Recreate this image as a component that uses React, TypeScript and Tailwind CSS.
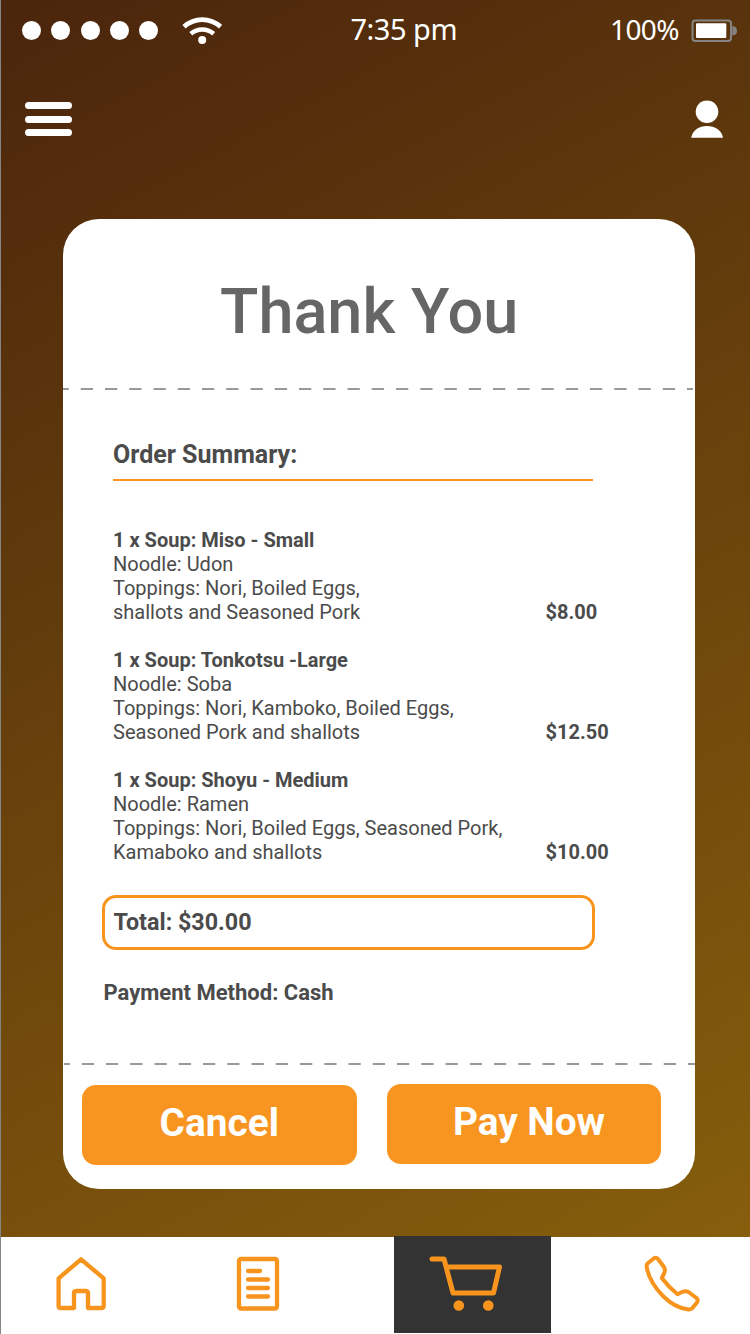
import React from 'react';

type Item = { title: string; lines: string[]; price: string };

const items: Item[] = [
  { title: '1 x Soup: Miso - Small', lines: ['Noodle: Udon', 'Toppings: Nori, Boiled Eggs,', 'shallots and Seasoned Pork'], price: '$8.00' },
  { title: '1 x Soup: Tonkotsu -Large', lines: ['Noodle: Soba', 'Toppings: Nori, Kamboko, Boiled Eggs,', 'Seasoned Pork and shallots'], price: '$12.50' },
  { title: '1 x Soup: Shoyu - Medium', lines: ['Noodle: Ramen', 'Toppings: Nori, Boiled Eggs, Seasoned Pork,', 'Kamaboko and shallots'], price: '$10.00' },
];

function StatusBar() {
  return (
    <div className="flex h-[62px] items-start font-['Noto_Sans',sans-serif] text-white">
      <div className="flex w-[350.500px] items-start pl-[22px] pt-[16px]">
        <div className="flex gap-[10.3px] pt-[5px]">
          {[0, 1, 2, 3, 4].map((n) => (
            <span key={n} className="size-[19px] rounded-full bg-white" />
          ))}
        </div>
        <svg className="ml-[24px]" width="40" height="30" viewBox="0 0 40 30" fill="none" stroke="white">
          <path d="M2 10.700C12.500 1.200 28 1.200 38.500 10.700" strokeWidth="4.800" />
          <path d="M8.800 17.700C15.500 12 25 12 31.700 17.700" strokeWidth="4.600" />
          <circle cx="20.200" cy="24" r="4" fill="white" stroke="none" />
        </svg>
      </div>
      <span className="w-[259.500px] pt-[11px] text-[29px] leading-[36px] tracking-[-0.5px] whitespace-nowrap">7:35 pm</span>
      <span className="w-[81px] pt-[11px] text-[28px] leading-[36px] tracking-[-0.600px] whitespace-nowrap">100%</span>
      <svg className="mt-[18px]" width="48" height="26" viewBox="0 0 48 26">
        <rect x="1.500" y="2.500" width="38.500" height="20.500" rx="3" fill="none" stroke="#858585" strokeWidth="2" />
        <rect x="5" y="5.300" width="30.300" height="14.700" rx="1" fill="white" />
        <path d="M41.300 8Q46 8.500 46 13Q46 17 41.300 17.500Z" fill="#858585" />
      </svg>
    </div>
  );
}

function Header() {
  return (
    <div className="flex h-[157px] items-start justify-between pt-[38px] pr-[26px] pl-[25px]">
      <div className="flex flex-col gap-[6.300px] pt-[2px]">
        <span className="h-[7.300px] w-[47px] rounded-full bg-white" />
        <span className="h-[7.300px] w-[47px] rounded-full bg-white" />
        <span className="h-[7.300px] w-[47px] rounded-full bg-white" />
      </div>
      <svg width="34" height="40" viewBox="0 0 34 40" fill="white">
        <circle cx="17" cy="11.700" r="11.300" />
        <path d="M1.200 37.800C2.500 30 9 26 17 26S31.700 30 33 37.800Z" />
      </svg>
    </div>
  );
}

function DashedLine({ offset, start, end }: { offset: number; start: number; end: number }) {
  return (
    <svg className="block shrink-0" width="632" height="2" viewBox="0 0 632 2">
      <line x1={start} y1="1" x2={end} y2="1" stroke="#999999" strokeWidth="2" strokeDasharray="12.3 11.95" strokeDashoffset={offset} />
    </svg>
  );
}

function Card() {
  return (
    <main className="ml-[63px] flex h-[970px] w-[632px] shrink-0 flex-col rounded-[36px] bg-white font-['Roboto',sans-serif] text-[#4b4b4b]">
      <h1 className="h-[169px] pt-[61px] pl-[157px] text-[63px] leading-[64px] font-medium text-[#666666]">Thank You</h1>
      <DashedLine offset={6.500} start={0} end={630} />
      <section className="flex h-[673px] flex-col pt-[50px]">
        <h2 className="ml-[50px] h-[41px] w-[480px] border-b-2 border-[#f7941e] text-[25px] leading-[30px] font-bold">Order Summary:</h2>
        <div className="mt-[47px] ml-[50px] flex flex-col gap-[24px] text-[20px] leading-[24px] whitespace-nowrap">
          {items.map((item) => (
            <article key={item.title} className="flex items-end">
              <div className="w-[432.500px]">
                <h3 className="font-bold">{item.title}</h3>
                {item.lines.map((line) => (
                  <p key={line}>{line}</p>
                ))}
              </div>
              <span className="font-bold">{item.price}</span>
            </article>
          ))}
        </div>
        <div className="mt-[31px] ml-[39px] h-[55px] w-[492.500px] rounded-[14px] border-3 border-[#f7941e] pt-[9px] pl-[8.500px] text-[23.300px] leading-[30px] font-bold">
          Total: $30.00
        </div>
        <p className="mt-[28px] ml-[40.500px] text-[22px] leading-[30px] font-bold">Payment Method: Cash</p>
      </section>
      <DashedLine offset={6.500} start={1} end={632} />
      <div className="flex gap-[30.500px] pt-[19px] pl-[19px] text-[38.800px] font-bold text-white">
        <button className="mt-[0.500px] flex h-[80px] w-[274.500px] justify-center rounded-[14px] bg-[#f89521] pt-[14px] leading-[48px]">Cancel</button>
        <button className="flex h-[80px] w-[274px] justify-center rounded-[14px] bg-[#f89521] pt-[14px] pl-[10px] leading-[48px]">Pay Now</button>
      </div>
    </main>
  );
}

function BottomNav() {
  return (
    <nav className="mt-[48px] flex h-[97px] bg-white text-[#f7941e]">
      <svg width="197" height="97" viewBox="0 1237 197 97" fill="none" stroke="currentColor" strokeWidth="4.300" strokeLinejoin="round">
        <path d="M58.600 1278.300L81 1259.300L103.700 1278.300V1306Q103.700 1308 101.500 1308H88V1293.500Q88 1291 85.500 1291H76.500Q74 1291 74 1293.500V1308H60.500Q58.600 1308 58.600 1306Z" />
      </svg>
      <svg width="197" height="97" viewBox="197 1237 197 97" fill="none" stroke="currentColor" strokeWidth="4.300" strokeLinecap="round">
        <rect x="239" y="1259" width="38" height="49.500" rx="2" />
        <path d="M248 1271H260M248 1279.500H268M248 1288H268M248 1296.500H268" />
      </svg>
      <div className="-mt-px flex h-[97px] w-[157px] bg-[#333333]">
        <svg width="157" height="97" viewBox="394 1236 157 97" fill="none" stroke="currentColor" strokeWidth="5" strokeLinecap="round" strokeLinejoin="round">
          <path d="M432 1259H444L453 1293H493.500L499.500 1267H447" />
          <circle cx="458.800" cy="1305.500" r="5.300" fill="currentColor" stroke="none" />
          <circle cx="488.300" cy="1305.500" r="5.300" fill="currentColor" stroke="none" />
        </svg>
      </div>
      <svg width="199" height="97" viewBox="551 1237 199 97" fill="none" stroke="currentColor" strokeWidth="4" strokeLinejoin="round">
        <path d="M647.500 1263.500L654 1258.200Q656 1257 658 1259L664.300 1267.500Q665.500 1270 664.300 1273L661.800 1278Q668.500 1287 677.500 1294.300L682 1292Q685.500 1290.500 688.500 1292L696.500 1298Q698.500 1300 697 1302.500L692 1308.500Q690 1310 687.500 1309.300Q674.500 1307.500 663.500 1296.500C654.500 1287.500 648.500 1278 646.700 1267Q646.400 1265 647.500 1263.500Z" />
      </svg>
    </nav>
  );
}

export default function App() {
  return (
    <div className="relative flex h-[1334px] w-[750px] flex-col overflow-hidden bg-[linear-gradient(152deg,#4b250c_0%,#865e0c_100%)] bg-[length:750px_1240px] bg-no-repeat">
      <StatusBar />
      <Header />
      <Card />
      <BottomNav />
      <div className="absolute inset-y-0 left-0 w-px bg-[#858585]" />
    </div>
  );
}
